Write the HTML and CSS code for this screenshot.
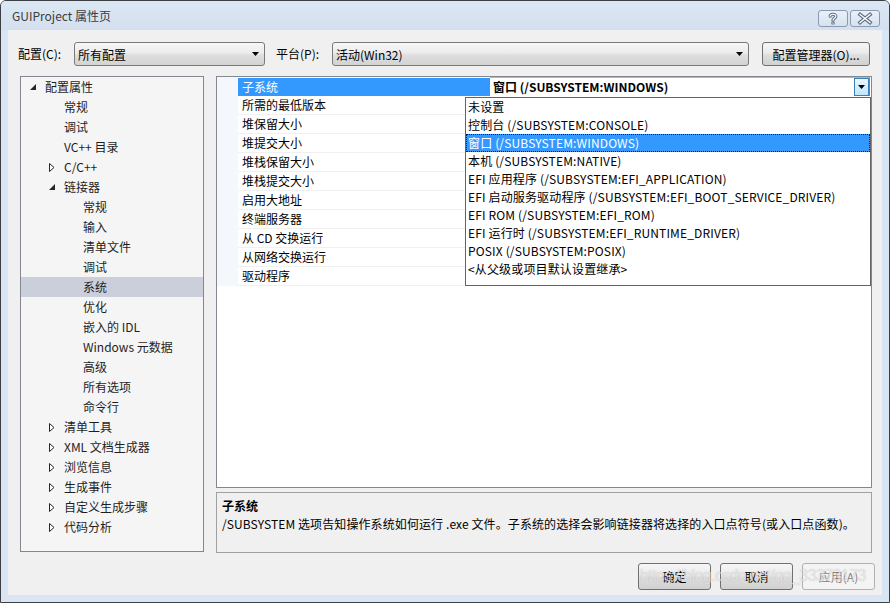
FILE: index.html
```html
<!DOCTYPE html>
<html lang="zh-CN">
<head>
<meta charset="utf-8">
<title>GUIProject 属性页</title>
<link rel="stylesheet" href="styles.css">
</head>
<body>
<div class="window">
  <div class="titlebar">
    <span class="title">GUIProject 属性页</span>
    <div class="caption-btns">
      <div class="cbtn">
        <svg width="28" height="15" viewBox="0 0 28 15">
          <path d="M11.2 5.2 C11.2 2.8 16.8 2.6 16.8 5.3 C16.8 7.2 14 7.3 14 9.2" fill="none" stroke="#5f6f84" stroke-width="3.2" stroke-linecap="round"/>
          <rect x="12.4" y="10.6" width="3.2" height="2.8" fill="#5f6f84"/>
          <path d="M11.2 5.2 C11.2 2.8 16.8 2.6 16.8 5.3 C16.8 7.2 14 7.3 14 9.2" fill="none" stroke="#ffffff" stroke-width="1.2" stroke-linecap="round"/>
          <rect x="13.4" y="11.4" width="1.2" height="1.2" fill="#ffffff"/>
        </svg>
      </div>
      <div class="cbtn">
        <svg width="28" height="15" viewBox="0 0 28 15">
          <path d="M9 3.5 L19 11.5 M19 3.5 L9 11.5" fill="none" stroke="#5f6f84" stroke-width="3.6" stroke-linecap="square"/>
          <path d="M9 3.5 L19 11.5 M19 3.5 L9 11.5" fill="none" stroke="#ffffff" stroke-width="1.4" stroke-linecap="square"/>
        </svg>
      </div>
    </div>
  </div>

  <div class="client">
    <div class="toolbar">
      <span class="lbl">配置(C):</span>
      <div class="combo combo-config">
        <span>所有配置</span>
        <svg class="arrow" width="7" height="4" viewBox="0 0 7 4"><polygon points="0,0 7,0 3.5,4" fill="#000"/></svg>
      </div>
      <span class="lbl lbl-platform">平台(P):</span>
      <div class="combo combo-platform">
        <span>活动(Win32)</span>
        <svg class="arrow" width="7" height="4" viewBox="0 0 7 4"><polygon points="0,0 7,0 3.5,4" fill="#000"/></svg>
      </div>
      <div class="btn btn-mgr">配置管理器(O)...</div>
    </div>

    <div class="main">
      <div class="tree">
        <div class="item l0"><span class="tw"><svg width="6" height="6" viewBox="0 0 6 6"><polygon points="6,0 6,6 0,6" fill="#262626"/></svg></span>配置属性</div>
        <div class="item l1"><span class="tw"></span>常规</div>
        <div class="item l1"><span class="tw"></span>调试</div>
        <div class="item l1"><span class="tw"></span>VC++ 目录</div>
        <div class="item l1"><span class="tw"><svg width="6" height="9" viewBox="0 0 6 9"><polygon points="0.5,0.5 5,4.5 0.5,8.5" fill="#fff" stroke="#262626" stroke-width="1"/></svg></span>C/C++</div>
        <div class="item l1"><span class="tw"><svg width="6" height="6" viewBox="0 0 6 6"><polygon points="6,0 6,6 0,6" fill="#262626"/></svg></span>链接器</div>
        <div class="item l2"><span class="tw"></span>常规</div>
        <div class="item l2"><span class="tw"></span>输入</div>
        <div class="item l2"><span class="tw"></span>清单文件</div>
        <div class="item l2"><span class="tw"></span>调试</div>
        <div class="item l2 selected"><span class="tw"></span>系统</div>
        <div class="item l2"><span class="tw"></span>优化</div>
        <div class="item l2"><span class="tw"></span>嵌入的 IDL</div>
        <div class="item l2"><span class="tw"></span>Windows 元数据</div>
        <div class="item l2"><span class="tw"></span>高级</div>
        <div class="item l2"><span class="tw"></span>所有选项</div>
        <div class="item l2"><span class="tw"></span>命令行</div>
        <div class="item l1"><span class="tw"><svg width="6" height="9" viewBox="0 0 6 9"><polygon points="0.5,0.5 5,4.5 0.5,8.5" fill="#fff" stroke="#262626" stroke-width="1"/></svg></span>清单工具</div>
        <div class="item l1"><span class="tw"><svg width="6" height="9" viewBox="0 0 6 9"><polygon points="0.5,0.5 5,4.5 0.5,8.5" fill="#fff" stroke="#262626" stroke-width="1"/></svg></span>XML 文档生成器</div>
        <div class="item l1"><span class="tw"><svg width="6" height="9" viewBox="0 0 6 9"><polygon points="0.5,0.5 5,4.5 0.5,8.5" fill="#fff" stroke="#262626" stroke-width="1"/></svg></span>浏览信息</div>
        <div class="item l1"><span class="tw"><svg width="6" height="9" viewBox="0 0 6 9"><polygon points="0.5,0.5 5,4.5 0.5,8.5" fill="#fff" stroke="#262626" stroke-width="1"/></svg></span>生成事件</div>
        <div class="item l1"><span class="tw"><svg width="6" height="9" viewBox="0 0 6 9"><polygon points="0.5,0.5 5,4.5 0.5,8.5" fill="#fff" stroke="#262626" stroke-width="1"/></svg></span>自定义生成步骤</div>
        <div class="item l1"><span class="tw"><svg width="6" height="9" viewBox="0 0 6 9"><polygon points="0.5,0.5 5,4.5 0.5,8.5" fill="#fff" stroke="#262626" stroke-width="1"/></svg></span>代码分析</div>
      </div>

      <div class="right">
        <div class="grid">
          <div class="rows">
            <div class="row row-sel">
              <div class="gut"></div>
              <div class="name">子系统</div>
              <div class="value">
                <span class="value-text">窗口 (/SUBSYSTEM:WINDOWS)</span>
                <div class="dd-btn"><svg width="7" height="4" viewBox="0 0 7 4"><polygon points="0,0 7,0 3.5,4" fill="#000"/></svg></div>
              </div>
            </div>
            <div class="row"><div class="gut"></div><div class="name">所需的最低版本</div><div class="value"></div></div>
            <div class="row"><div class="gut"></div><div class="name">堆保留大小</div><div class="value"></div></div>
            <div class="row"><div class="gut"></div><div class="name">堆提交大小</div><div class="value"></div></div>
            <div class="row"><div class="gut"></div><div class="name">堆栈保留大小</div><div class="value"></div></div>
            <div class="row"><div class="gut"></div><div class="name">堆栈提交大小</div><div class="value"></div></div>
            <div class="row"><div class="gut"></div><div class="name">启用大地址</div><div class="value"></div></div>
            <div class="row"><div class="gut"></div><div class="name">终端服务器</div><div class="value"></div></div>
            <div class="row"><div class="gut"></div><div class="name">从 CD 交换运行</div><div class="value"></div></div>
            <div class="row"><div class="gut"></div><div class="name">从网络交换运行</div><div class="value"></div></div>
            <div class="row"><div class="gut"></div><div class="name">驱动程序</div><div class="value"></div></div>
          </div>
          <div class="dropdown">
            <div class="opt">未设置</div>
            <div class="opt">控制台 (/SUBSYSTEM:CONSOLE)</div>
            <div class="opt opt-sel">窗口 (/SUBSYSTEM:WINDOWS)</div>
            <div class="opt">本机 (/SUBSYSTEM:NATIVE)</div>
            <div class="opt">EFI 应用程序 (/SUBSYSTEM:EFI_APPLICATION)</div>
            <div class="opt">EFI 启动服务驱动程序 (/SUBSYSTEM:EFI_BOOT_SERVICE_DRIVER)</div>
            <div class="opt">EFI ROM (/SUBSYSTEM:EFI_ROM)</div>
            <div class="opt">EFI 运行时 (/SUBSYSTEM:EFI_RUNTIME_DRIVER)</div>
            <div class="opt">POSIX (/SUBSYSTEM:POSIX)</div>
            <div class="opt">&lt;从父级或项目默认设置继承&gt;</div>
          </div>
        </div>
        <div class="desc">
          <div class="desc-title">子系统</div>
          <div class="desc-text">/SUBSYSTEM 选项告知操作系统如何运行 .exe 文件。子系统的选择会影响链接器将选择的入口点符号(或入口点函数)。</div>
        </div>
      </div>
    </div>

    <div class="buttons">
      <div class="btn btn-dlg">确定</div>
      <div class="btn btn-dlg">取消</div>
      <div class="btn btn-dlg disabled">应用(A)</div>
    </div>
  </div>
  <div class="watermark">https://blog.csdn.net/qq_33373173</div>
</div>
</body>
</html>
```

FILE: styles.css
```css
* { box-sizing: border-box; }

html, body {
  margin: 0;
  padding: 0;
  background: #ffffff;
}

body {
  font-family: "Noto Sans CJK SC", "Noto Sans", sans-serif;
  font-size: 12px;
  color: #000;
}

.window {
  position: relative;
  width: 890px;
  height: 603px;
  border: 1px solid #3c3f44;
  border-radius: 6px 6px 0 0;
  background: #d9e5f3;
  padding: 0 7px 7px 7px;
  display: flex;
  flex-direction: column;
  overflow: hidden;
}

.titlebar {
  height: 29px;
  flex: none;
  display: flex;
  justify-content: space-between;
  align-items: flex-start;
  margin: 0 -7px;
  padding: 0 9px 0 11px;
  background: linear-gradient(#dce7f4, #d4e0ef);
}

.title {
  line-height: 30px;
  color: #3c3c3c;
  font-size: 12px;
}

.caption-btns {
  display: flex;
  gap: 2px;
  margin-top: 9px;
}

.cbtn {
  width: 30px;
  height: 17px;
  border: 1px solid #8a99ad;
  border-radius: 3px;
  background: linear-gradient(#e9f0f8, #d7e2ef);
  display: flex;
  align-items: center;
  justify-content: center;
}

.client {
  flex: 1;
  background: #f0f0f0;
  padding: 12px 7px 0 10px;
  display: flex;
  flex-direction: column;
}

.toolbar {
  height: 24px;
  display: flex;
  align-items: center;
}

.lbl {
  width: 56px;
  line-height: 24px;
}

.lbl-platform {
  margin-left: 11px;
}

.combo {
  height: 24px;
  border: 1px solid #7a7a7a;
  border-radius: 3px;
  background: linear-gradient(#f7f7f7, #ececec 45%, #dedede 55%, #d3d3d3);
  display: flex;
  align-items: center;
  justify-content: space-between;
  padding: 0 5px 0 3px;
}

.combo-config { width: 191px; }
.combo-platform { width: 417px; }

.btn {
  border: 1px solid #707070;
  border-radius: 3px;
  background: linear-gradient(#f6f6f6, #ebebeb 45%, #dddddd 55%, #d1d1d1);
  display: flex;
  align-items: center;
  justify-content: center;
}

.btn-mgr {
  width: 108px;
  height: 24px;
  margin-left: 13px;
}

.main {
  margin-top: 10px;
  height: 477px;
  display: flex;
  align-items: flex-start;
}

.tree {
  margin-left: 2px;
  width: 184px;
  height: 476px;
  border: 1px solid #828790;
  background: #f5f5f5;
}

.item {
  height: 20px;
  line-height: 20px;
  display: flex;
  align-items: center;
  color: #1e1e1e;
  white-space: nowrap;
}

.item.l0 { padding-left: 9px; }
.item.l1 { padding-left: 28px; }
.item.l2 { padding-left: 47px; }

.item.selected {
  background: #cbcedb;
}

.tw {
  width: 15px;
  flex: none;
  display: flex;
  align-items: center;
}

.right {
  margin-left: 12px;
  width: 656px;
  display: flex;
  flex-direction: column;
}

.grid {
  position: relative;
  height: 412px;
  border: 1px solid #828790;
  background: #ffffff;
}

.row {
  height: 19px;
  display: flex;
}

.gut {
  width: 21px;
  flex: none;
  background: #f4f7fc;
}

.name {
  width: 252px;
  flex: none;
  padding-left: 4px;
  line-height: 18px;
  border-bottom: 1px solid #f0f0f0;
  white-space: nowrap;
}

.value {
  flex: 1;
  border-bottom: 1px solid #f0f0f0;
}

.row-sel .name {
  background: #3399ff;
  color: #ffffff;
  border-bottom-color: #3399ff;
  margin-top: 1px;
}

.row-sel .value {
  display: flex;
  justify-content: space-between;
  border-top: 1px solid #b5b5b5;
  border-right: 1px solid #828282;
  border-bottom: none;
  margin-right: 1px;
}

.value-text {
  font-weight: bold;
  padding-left: 3px;
  line-height: 18px;
}

.dd-btn {
  width: 15px;
  height: 18px;
  border: 1px solid #3c7fb1;
  background: linear-gradient(#eaf6fd, #bee6fd);
  display: flex;
  align-items: center;
  justify-content: center;
}

.dropdown {
  position: absolute;
  left: 248px;
  top: 20px;
  width: 406px;
  height: 189px;
  border: 1px solid #646464;
  background: #ffffff;
}

.opt {
  height: 18px;
  line-height: 18px;
  padding-left: 2px;
  white-space: nowrap;
  letter-spacing: 0.15px;
}

.opt-sel {
  background: #3399ff;
  color: #ffffff;
  outline: 1px dotted #1a1a1a;
  outline-offset: -1px;
}

.desc {
  margin-top: 4px;
  height: 61px;
  border: 1px solid #a0a0a0;
  background: #f0f0f0;
  padding: 4px 5px;
}

.desc-title {
  font-weight: bold;
  line-height: 18px;
}

.desc-text {
  line-height: 18px;
  white-space: nowrap;
  letter-spacing: 0.1px;
}

.buttons {
  margin-top: 10px;
  display: flex;
  justify-content: flex-end;
  gap: 9px;
}

.btn-dlg {
  width: 73px;
  height: 27px;
}

.btn-dlg.disabled {
  border-color: #adb2b5;
  background: #f4f4f4;
  color: #838383;
}

.watermark {
  position: absolute;
  left: 639px;
  top: 566px;
  font-family: "Liberation Sans", sans-serif;
  font-size: 16px;
  letter-spacing: -0.6px;
  color: rgba(255, 255, 255, 0.6);
  text-shadow: 0 0 1px rgba(110, 110, 110, 0.45);
  white-space: nowrap;
  pointer-events: none;
}
```
